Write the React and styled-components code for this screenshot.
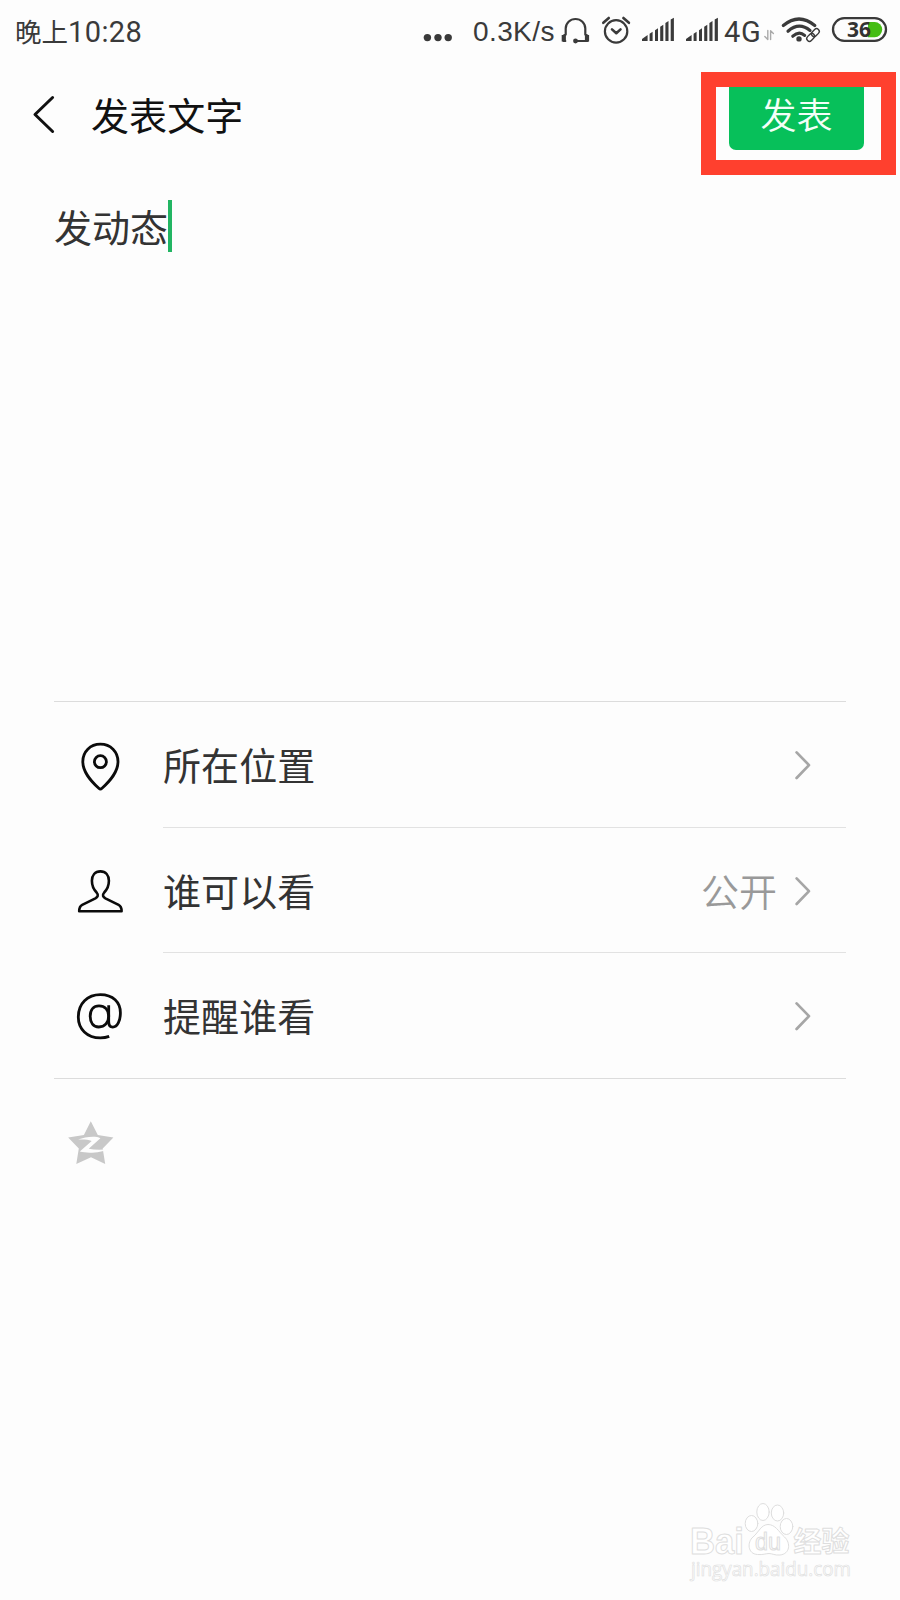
import React from 'react';
import styled, { createGlobalStyle } from 'styled-components';

const GlobalStyle = createGlobalStyle`
  * { box-sizing: border-box; }
  body {
    margin: 0;
    background: #fdfdfd;
    font-family: 'Noto Sans CJK SC', 'Noto Sans', sans-serif;
  }
`;

const Screen = styled.main`
  position: relative;
  width: 900px;
  height: 1600px;
  overflow: hidden;
  display: flex;
  flex-direction: column;
  background: #fdfdfd;
`;

const StatusBar = styled.header`
  height: 60px;
  flex: none;
  display: flex;
  align-items: center;
  justify-content: space-between;
  padding: 2px 13px 0 15px;
  color: #3a3a3a;
`;

const Clock = styled.div`
  display: flex;
  align-items: center;
  font-size: 26.5px;
  line-height: 58px;
  white-space: nowrap;
`;

const Digits = styled.span`
  font-family: Roboto, sans-serif;
  font-size: 29px;
  letter-spacing: 0.4px;
  padding-top: 1px;
`;

const Indicators = styled.div`
  display: flex;
  align-items: center;
`;

const Label = styled.span`
  width: ${(p) => p.$width}px;
  padding: 1px 0 0 1px;
  font-family: ${(p) => p.$font || "'Liberation Sans', sans-serif"};
  font-size: ${(p) => p.$size}px;
  letter-spacing: ${(p) => p.$spacing || 0}px;
  line-height: 58px;
  white-space: nowrap;
`;

const Glyph = styled.svg`
  display: block;
  flex: none;
  width: ${(p) => p.$w}px;
  height: ${(p) => p.$h}px;
  overflow: visible;
  fill: none;
  stroke-linecap: round;
  stroke-linejoin: round;
`;

const TitleBar = styled.div`
  height: 110px;
  flex: none;
  display: flex;
  align-items: center;
  padding: 0 36px 0 33px;
`;

const Title = styled.h1`
  flex: 1;
  margin: 0 0 2px 36px;
  font-size: 38px;
  font-weight: 400;
  line-height: 56px;
  letter-spacing: 0.1px;
  color: #111;
`;

const PublishSlot = styled.div`
  position: relative;
`;

const PublishButton = styled.button`
  display: block;
  width: 135px;
  height: 70px;
  padding: 0 0 4px;
  border: 0;
  border-radius: 7px;
  background: #07c05a;
  color: #f3fff8;
  font-family: inherit;
  font-size: 36px;
  font-weight: 350;
  line-height: 66px;
`;

const Highlight = styled.div`
  position: absolute;
  left: -28px;
  top: -8px;
  width: 195px;
  height: 103px;
  border: 15.5px solid #ff402e;
`;

const Composer = styled.section`
  height: 531px;
  flex: none;
  display: flex;
  align-items: flex-start;
  padding: 30px 54px 0;
  font-size: 38px;
  line-height: 51px;
  color: #333;
`;

const Caret = styled.i`
  width: 4px;
  height: 52px;
  background: #22b563;
`;

const Options = styled.ul`
  flex: none;
  list-style: none;
  margin: 0 54px;
  padding: 0;
  border-top: 1px solid #dcdcdc;
  border-bottom: 1px solid #dcdcdc;
`;

const Option = styled.li`
  display: flex;
  height: ${(p) => p.$height}px;
`;

const OptionIcon = styled.div`
  width: 109px;
  display: flex;
  align-items: center;
  padding-left: 22px;
  padding-top: 1px;
`;

const OptionBody = styled.div`
  flex: 1;
  display: flex;
  align-items: center;
  padding-right: 36px;
  padding-top: 3px;
  border-bottom: ${(p) => (p.$last ? '0' : '1px solid #e2e2e2')};
`;

const OptionLabel = styled.span`
  flex: 1;
  margin-bottom: 4px;
  font-size: 38px;
  line-height: 56px;
  letter-spacing: 0.1px;
  color: #333;
`;

const OptionValue = styled.span`
  margin: 0 18px 4px 0;
  font-size: 38px;
  font-weight: 350;
  line-height: 56px;
  color: #999;
`;

const ShareRow = styled.div`
  padding: 42px 68px 0;
`;

const Watermark = styled.footer`
  position: absolute;
  right: 40px;
  bottom: 10px;
`;

const Dots = () => (
  <Glyph $w={29} $h={26} viewBox="423 18 29 26">
    {[427.4, 438, 448.2].map((x) => <circle key={x} cx={x} cy="37.6" r="3.7" fill="#3a3a3a" />)}
  </Glyph>
);

const Headset = () => (
  <Glyph $w={28} $h={26} viewBox="561 18 28 26" stroke="#3a3a3a" strokeWidth="2.2">
    <path d="M565.3 41H563.6V35.8L565.7 34.5V28.5A9.8 9.5 0 0 1 585.3 28.5V34.5L587.5 35.8V41H575.5" />
    <path d="M563.8 35V41.5M587 35V41.5" strokeWidth="4.2" strokeLinecap="butt" />
    <circle cx="575.5" cy="41" r="2.4" fill="#3a3a3a" stroke="none" />
  </Glyph>
);

const Alarm = () => (
  <Glyph $w={28} $h={26} viewBox="601.5 18 28 26" stroke="#3a3a3a" strokeWidth="2.2">
    <circle cx="615.6" cy="31.4" r="11.2" />
    <path d="M602.8 22.8L608.3 18M628.4 22.8L622.9 18" strokeWidth="2.6" />
    <path d="M611.5 29.4L615.8 33.2L620 29.4" strokeWidth="2.6" />
  </Glyph>
);

const Signal = () => (
  <Glyph $w={32} $h={26} viewBox="0 0 32 26">
    <path
      fill="#3a3a3a"
      d="M0 23V21L5.6 17V23ZM7.6 23V15.8L10.6 13.8V23ZM13 23V12.2L16 10.2V23ZM18.2 23V8.7L21.3 6.7V23ZM23.4 23V5.1L26.5 3.1V23ZM28.7 23V1.6L31.9 -0.3V23Z"
    />
  </Glyph>
);

const DataArrows = () => (
  <Glyph $w={10} $h={26} viewBox="764 18 10 26" stroke="#aaa" strokeWidth="1.4">
    <path d="M767.8 30.5V39.5L764.8 36.5M770.6 39.5V30.8L773.4 33.5" />
  </Glyph>
);

const Wifi = () => (
  <Glyph $w={38} $h={26} viewBox="782 18 38 26" stroke="#3a3a3a" strokeWidth="3.2">
    <path d="M783.3 25.5Q799 12.5 814.8 25.5" />
    <path d="M788 31.2Q799 21.6 810 30.4" />
    <path d="M792.8 36.2Q799 30.4 804.6 35.4" />
    <circle cx="799" cy="38.9" r="2.7" fill="#3a3a3a" stroke="none" />
    <g strokeWidth="1.4" transform="rotate(-45 813 35)">
      <rect x="805.3" y="32.3" width="8.8" height="5.4" rx="2.7" />
      <rect x="811.9" y="32.3" width="8.8" height="5.4" rx="2.7" />
    </g>
  </Glyph>
);

const Battery = () => (
  <Glyph $w={55} $h={26} viewBox="832 18 55 26">
    <rect x="833" y="18.2" width="53" height="22.6" rx="11.3" stroke="#3a3a3a" strokeWidth="2.3" />
    <path d="M868 22H874.6A7.6 7.6 0 0 1 874.6 37.2H868Z" fill="#45bd14" />
    <text
      x="847"
      y="37"
      fill="#333"
      fontFamily="'Open Sans', sans-serif"
      fontSize="21.5"
      fontWeight="700"
      textLength="24"
      lengthAdjust="spacingAndGlyphs"
    >
      36
    </text>
  </Glyph>
);

const Back = () => (
  <Glyph $w={22} $h={38} viewBox="33 96 22 38" stroke="#111" strokeWidth="3">
    <path d="M52.6 97.5L35 114.5L52.6 131.5" />
  </Glyph>
);

const Chevron = () => (
  <Glyph $w={15} $h={32} viewBox="795 748.6 15 32" stroke="#a6a6a6" strokeWidth="2.7">
    <path d="M796.6 751L809 763.7L796.6 776.6" />
  </Glyph>
);

const Pin = () => (
  <Glyph $w={48} $h={50} viewBox="76 740 48 50" stroke="#0b0b0b" strokeWidth="2.8">
    <path d="M100.4 743.2C90.2 743.2 82.8 750.8 82.8 760.6C82.8 771 90.3 779.4 98.8 787.3Q100.4 788.8 102 787.3C110.5 779.4 118 771 118 760.6C118 750.8 110.6 743.2 100.4 743.2Z" />
    <circle cx="100.4" cy="760.7" r="6" />
  </Glyph>
);

const Person = () => (
  <Glyph $w={48} $h={50} viewBox="76 866 48 50" stroke="#0b0b0b" strokeWidth="2.6">
    <path d="M100.4 871.4C95 871.4 91.9 875.5 91.9 880.8C91.9 886 93.4 889.2 96.6 892.5C98.8 895 97.8 897 95.4 898.3L82.2 904.8C79.8 906 79.2 907.5 79.2 911.2H121.6C121.6 907.5 121 906 118.6 904.8L105.4 898.3C103 897 102 895 104.2 892.5C107.4 889.2 108.9 886 108.9 880.8C108.9 875.5 105.8 871.4 100.4 871.4Z" />
  </Glyph>
);

const Mention = () => (
  <Glyph $w={48} $h={50} viewBox="76 991 48 50" stroke="#0b0b0b" strokeWidth="2.8">
    <path strokeLinecap="butt" d="M109.2 1036.4C106.3 1037.5 103.4 1037.9 100.4 1037.9C87 1037.9 78.3 1029 78.3 1017C78.3 1003.5 87.5 994.7 100.4 994.7C113 994.7 120.4 1002.4 120.4 1012.8C120.4 1020.8 117.4 1027.1 112.8 1027.1C109.6 1027.1 108.7 1025 108.7 1021.5V1005.2" />
    <path d="M108.7 1016C108.7 1022.5 104.8 1027 98.8 1027C93.4 1027 90.2 1023 90.2 1016.3C90.2 1009.8 93.6 1005.8 99 1005.8C104.8 1005.8 108.7 1010 108.7 1016Z" />
  </Glyph>
);

const QzoneStar = () => (
  <Glyph $w={46} $h={44} viewBox="68 1121 46 44">
    <path
      fill="#c8c8c8"
      d="M90.8 1121.3L97.8 1135L113.4 1137.5L102.7 1148.5L105.2 1164L91 1157.2L76.3 1164L78.8 1148.5L68.2 1137.5L83.9 1135Z"
    />
    <path
      fill="#fdfdfd"
      d="M78.2 1139.6C85 1136.8 95.6 1135.5 100.4 1138.2L88.7 1148.7C94.5 1149.8 101.7 1150 107.8 1148.9C102 1152.6 88.3 1153.9 79.8 1151.6L91.7 1141C87.9 1139.5 82.7 1139.2 78.2 1139.6Z"
    />
  </Glyph>
);

const Brand = () => (
  <Glyph $w={170} $h={90} viewBox="690 1500 170 90" stroke="#dedede" strokeWidth="1">
    <g fill="#fff">
      <ellipse cx="751.5" cy="1523.5" rx="6.3" ry="8" />
      <ellipse cx="763" cy="1512" rx="6.2" ry="8.5" />
      <ellipse cx="777.5" cy="1513" rx="6.2" ry="8" />
      <ellipse cx="786.5" cy="1526.5" rx="6.3" ry="8" />
      <path d="M768 1524.5C761 1524.5 759 1532 753 1537C747 1542 747.5 1554 757.5 1554.5C763 1555 766 1553.5 769 1553.5C772 1553.5 775 1555.5 780 1555C790 1554 791 1543 784.5 1537C778 1531 775.5 1524.5 768 1524.5Z" />
    </g>
    <g fill="#fff" fontFamily="'Liberation Sans', sans-serif" fontWeight="700">
      <text x="690" y="1553.5" fontSize="37" textLength="54" lengthAdjust="spacingAndGlyphs">Bai</text>
      <text x="755" y="1549.5" fontSize="23" fontWeight="400" textLength="26" lengthAdjust="spacingAndGlyphs">du</text>
      <text x="793.5" y="1551.5" fontSize="28" fontFamily="'Noto Sans CJK SC', sans-serif" textLength="56">经验</text>
    </g>
    <text
      x="691"
      y="1575.5"
      fill="#fff"
      stroke="#e0e0e0"
      strokeWidth="0.7"
      fontFamily="'Open Sans', sans-serif"
      fontSize="20"
      textLength="160"
      lengthAdjust="spacingAndGlyphs"
    >
      jingyan.baidu.com
    </text>
  </Glyph>
);

const Gap = styled.span`
  flex: none;
  width: ${(p) => p.$w}px;
`;

const options = [
  { label: '所在位置', Icon: Pin, height: 126 },
  { label: '谁可以看', Icon: Person, value: '公开', height: 125 },
  { label: '提醒谁看', Icon: Mention, height: 125 },
];

export default function App() {
  return (
    <Screen>
      <GlobalStyle />
      <StatusBar>
        <Clock>
          晚上<Digits>10:28</Digits>
        </Clock>
        <Indicators>
          <Dots />
          <Gap $w={20} />
          <Label $width={89} $size={28} $spacing={0.4}>0.3K/s</Label>
          <Headset />
          <Gap $w={12.5} />
          <Alarm />
          <Gap $w={12} />
          <Signal />
          <Gap $w={12.5} />
          <Signal />
          <Gap $w={5} />
          <Label $width={41} $size={29} $spacing={0.7} $font="Roboto, sans-serif">4G</Label>
          <DataArrows />
          <Gap $w={8} />
          <Wifi />
          <Gap $w={12} />
          <Battery />
        </Indicators>
      </StatusBar>
      <TitleBar>
        <Back />
        <Title>发表文字</Title>
        <PublishSlot>
          <PublishButton>发表</PublishButton>
          <Highlight />
        </PublishSlot>
      </TitleBar>
      <Composer>
        发动态
        <Caret />
      </Composer>
      <Options>
        {options.map(({ label, Icon, value, height }, i) => (
          <Option key={label} $height={height}>
            <OptionIcon>
              <Icon />
            </OptionIcon>
            <OptionBody $last={i === options.length - 1}>
              <OptionLabel>{label}</OptionLabel>
              {value && <OptionValue>{value}</OptionValue>}
              <Chevron />
            </OptionBody>
          </Option>
        ))}
      </Options>
      <ShareRow>
        <QzoneStar />
      </ShareRow>
      <Watermark>
        <Brand />
      </Watermark>
    </Screen>
  );
}
